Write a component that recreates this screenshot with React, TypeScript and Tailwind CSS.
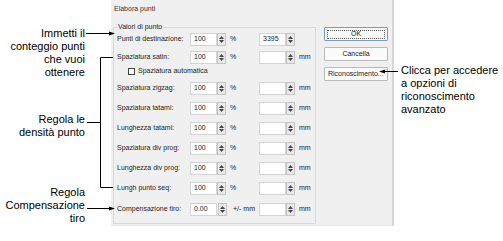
import React from 'react';

const dlgFont = { fontFamily: '"Liberation Sans", Arial, sans-serif' };

function Spinner({ className = '' }: { className?: string }) {
  return (
    <div className={`w-[9px] h-[13px] flex flex-col items-center justify-center gap-[1px] bg-[#e9e9e9] border border-[#c4c4c4] ${className}`}>
      <svg width="5" height="3" viewBox="0 0 5 3"><path d="M0 3 L2.5 0 L5 3 Z" fill="#444" /></svg>
      <svg width="5" height="3" viewBox="0 0 5 3"><path d="M0 0 L2.5 3 L5 0 Z" fill="#444" /></svg>
    </div>
  );
}

function Field({ value = '' }: { value?: string }) {
  return (
    <div className="w-[27px] h-[13px] bg-white border border-[#d4d4d4] flex items-center pl-[3px] text-[7px] text-[#222]">
      {value}
    </div>
  );
}

interface RowProps {
  label: string;
  value: string;
  unit?: string;
  second?: string;
  secondUnit?: string;
  h?: string;
}

function Row({ label, value, unit = '%', second = '', secondUnit = 'mm', h = 'h-[20px]' }: RowProps) {
  return (
    <div className={`flex items-center pl-[3px] ${h}`}>
      <div className="w-[73px] text-[7px] text-[#222] whitespace-nowrap">{label}</div>
      <Field value={value} />
      <Spinner />
      <div className="w-[33px] pl-[4px] text-[7px] text-[#222]">{unit}</div>
      <Field value={second} />
      <Spinner />
      <div className="pl-[4px] text-[7px] text-[#222]">{secondUnit}</div>
    </div>
  );
}

function Btn({ children, focus = false }: { children: React.ReactNode; focus?: boolean }) {
  return (
    <div className={`h-[14px] w-[64px] rounded-[1px] border bg-[#fbfbfb] flex items-center justify-center text-[7px] text-[#222] ${focus ? 'border-[#7a9cc4]' : 'border-[#b9b9b9]'}`}>
      {focus ? (
        <div className="w-[58px] h-[9px] border border-dotted border-[#555] flex items-center justify-center">{children}</div>
      ) : (
        children
      )}
    </div>
  );
}

export default function App() {
  return (
    <div className="relative w-[503px] h-[241px] bg-white flex overflow-hidden">
      {/* callouts left */}
      <div
        className="w-[111px] shrink-0 pr-[26px] text-right text-[11px] leading-[13px] text-black flex flex-col"
        style={{ fontFamily: '"Liberation Sans", Arial, sans-serif' }}
      >
        <div className="mt-[27px]">
          <div>Immetti il</div>
          <div>conteggio punti</div>
          <div>che vuoi</div>
          <div>ottenere</div>
        </div>
        <div className="mt-[34px]">
          <div>Regola le</div>
          <div>densità punto</div>
        </div>
        <div className="mt-[47px]">
          <div>Regola</div>
          <div>Compensazione</div>
          <div>tiro</div>
        </div>
      </div>

      {/* dialog */}
      <div className="w-[283px] h-[226px] shrink-0 bg-[#f0f0f0] border-r-2 border-b border-r-[#d6d6d6] border-b-[#e4e4e4] flex flex-col" style={dlgFont}>
        <div className="h-[18px] pl-[3px] flex items-center text-[7px] text-[#333]">Elabora punti</div>
        <div className="flex">
          <div className="relative ml-[2px] mt-[9px] w-[203px] h-[197px] border border-[#d9d9d9] flex flex-col pt-[2px]">
            <div className="absolute -top-[5px] left-[3px] bg-[#f0f0f0] px-[1px] text-[7px] text-[#222] leading-[8px]">Valori di punto</div>
            <Row label="Punti di destinazione:" value="100" second="3395" secondUnit="" h="h-[19px]" />
            <Row label="Spaziatura satin:" value="100" h="h-[17px]" />
            <div className="h-[10px] flex items-center pl-[14px] gap-[3px] text-[7px] text-[#222]">
              <div className="w-[7px] h-[7px] bg-white border border-[#444]" />
              <span>Spaziatura automatica</span>
            </div>
            <div className="h-[2px]" />
            <Row label="Spaziatura zigzag:" value="100" />
            <Row label="Spaziatura tatami:" value="100" />
            <Row label="Lunghezza tatami:" value="100" />
            <Row label="Spaziatura div prog:" value="100" />
            <Row label="Lunghezza div prog:" value="100" />
            <Row label="Lungh punto seq:" value="100" />
            <div className="h-[1px]" />
            <div className="flex items-center pl-[3px] h-[20px]">
              <div className="w-[73px] text-[7px] text-[#222] whitespace-nowrap">Compensazione tiro:</div>
              <Field value="0.00" />
              <Spinner className="ml-[1px]" />
              <div className="w-[32px] pl-[6px] text-[7px] text-[#222] whitespace-nowrap">+/- mm</div>
              <Field />
              <Spinner />
              <div className="pl-[4px] text-[7px] text-[#222]">mm</div>
            </div>
          </div>
          <div className="ml-[8px] mt-[9px] flex flex-col gap-[6px]">
            <Btn focus>OK</Btn>
            <Btn>Cancella</Btn>
            <div className="h-[14px] w-[64px] rounded-[1px] border border-[#b9b9b9] bg-[#fbfbfb] flex items-center pl-[3px] text-[7px] text-[#222] whitespace-nowrap overflow-hidden">
              Riconoscimento...
            </div>
          </div>
        </div>
      </div>

      {/* callout right */}
      <div
        className="pl-[7px] pt-[64px] text-[11px] leading-[13px] text-black"
        style={{ fontFamily: '"Liberation Sans", Arial, sans-serif' }}
      >
        <div>Clicca per accedere</div>
        <div>a opzioni di</div>
        <div>riconoscimento</div>
        <div>avanzato</div>
      </div>

      {/* leader lines */}
      <svg className="absolute inset-0 pointer-events-none" width="503" height="241" viewBox="0 0 503 241">
        <g stroke="#000" strokeWidth="1" fill="none">
          <path d="M86 33.5 H110" />
          <path d="M87 122.5 H100.5" />
          <path d="M113 57.5 H100.5 V187.5 H113" />
          <path d="M87 208.5 H110" />
          <path d="M398 71.5 H384" />
        </g>
        <g fill="#000">
          <path d="M115 33.5 L109 31.5 L109 35.5 Z" />
          <path d="M115 208.5 L109 206.5 L109 210.5 Z" />
          <path d="M379 71.5 L385 69.5 L385 73.5 Z" />
        </g>
      </svg>
    </div>
  );
}
